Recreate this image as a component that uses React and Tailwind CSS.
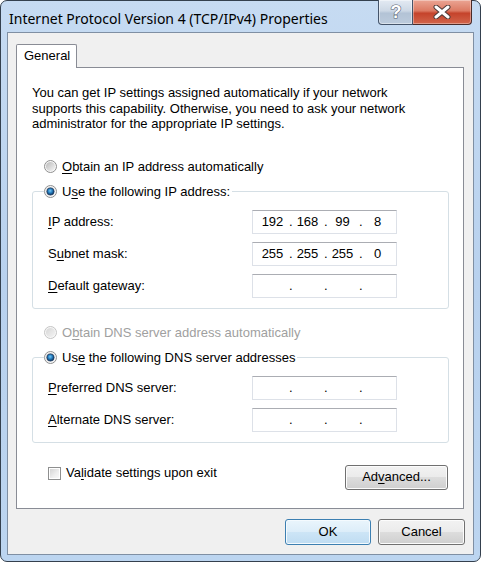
import React from "react";

const IpBox = ({ parts = ["", "", "", ""] }) => {
  return (
    <div className="h-[24px] w-[145px] border border-[#dde1e8] border-t-[#abadb3] bg-white flex items-center pl-[3px]">
      {parts.map((p, i) => (
        <React.Fragment key={i}>
          <span className="w-[33px] text-center">{p}</span>
          {i < 3 && <span className="w-[2px]">.</span>}
        </React.Fragment>
      ))}
    </div>
  );
};

const Radio = ({ checked, disabled }) => {
  const id = checked ? "on" : disabled ? "dis" : "off";
  return (
    <svg width="13" height="13" viewBox="0 0 13 13" className="shrink-0">
      <defs>
        <linearGradient id={`ring-${id}`} x1="0" y1="0" x2="1" y2="1">
          <stop offset="0" stopColor={disabled ? "#d6d6d6" : "#b9b9b9"} />
          <stop offset="1" stopColor={disabled ? "#f4f4f4" : "#f6f6f6"} />
        </linearGradient>
        <radialGradient id={`dot-${id}`} cx="0.45" cy="0.4" r="0.6">
          <stop offset="0" stopColor="#7cc8f2" />
          <stop offset="0.45" stopColor="#2a86c8" />
          <stop offset="1" stopColor="#0d2f57" />
        </radialGradient>
      </defs>
      <circle cx="6.5" cy="6.5" r="6" fill="#f7f7f7" stroke={disabled ? "#c4c4c4" : "#8f8f8f"} />
      <circle cx="6.5" cy="6.5" r="4.6" fill={`url(#ring-${id})`} />
      {checked && <circle cx="6.5" cy="6.5" r="3.6" fill={`url(#dot-${id})`} stroke="#183a63" strokeWidth="0.7" />}
    </svg>
  );
};

const Key = ({ children }) => <span className="underline underline-offset-[2px]">{children}</span>;

const App = () => {
  return (
    <div className="w-[481px] h-[562px] rounded-[7px] border border-[#34404e] bg-gradient-to-b from-[#c6dbf2] via-[#b8d1ee] to-[#bcd5f0] flex flex-col px-[6px] pb-[6px] font-['Liberation_Sans',Arial,sans-serif] text-[13px] text-black">
      {/* title bar */}
      <div className="h-[31px] flex items-start pl-[2px]">
        <span className="mt-[8px] text-[14px] leading-[20px] font-['Noto_Sans',sans-serif]">
          Internet Protocol Version 4 (TCP/IPv4) Properties
        </span>
        <div className="ml-auto -mt-px mr-[2px] flex h-[25px]">
          <div className="w-[35px] h-full rounded-bl-[4px] border border-t-0 border-[#44546a] bg-[linear-gradient(#e3eaf3_0%,#cdd8e5_45%,#b3c3d6_55%,#bccbdc_100%)] shadow-[inset_0_0_0_1px_rgba(255,255,255,0.45)] flex items-center justify-center">
            <svg width="14" height="18" viewBox="0 0 14 18">
              <text x="7" y="15" textAnchor="middle" fontSize="18" fontWeight="bold" fontFamily="Liberation Sans, Arial, sans-serif" fill="#ffffff" stroke="#5a6573" strokeWidth="1.2" paintOrder="stroke">?</text>
            </svg>
          </div>
          <div className="w-[59px] h-full rounded-br-[4px] border border-t-0 border-l-0 border-[#4a2b28] bg-[linear-gradient(#eba594_0%,#dc7a63_45%,#c5432b_55%,#d2654b_100%)] shadow-[inset_0_0_0_1px_rgba(255,255,255,0.35)] flex items-center justify-center">
            <svg width="18" height="14" viewBox="0 0 18 14">
              <path d="M3 2 L15 12 M15 2 L3 12" stroke="#4b3a38" strokeWidth="5" strokeLinecap="round" />
              <path d="M3 2 L15 12 M15 2 L3 12" stroke="#ffffff" strokeWidth="3" strokeLinecap="round" />
            </svg>
          </div>
        </div>
      </div>

      {/* client area */}
      <div className="flex-1 border border-[#7f8fa3] bg-[#f0f0f0] flex flex-col">
        <div className="mt-[11px] ml-[8px] relative z-10 -mb-px w-[61px] h-[24px] bg-white border border-b-0 border-[#898c95] rounded-t-[2px] pl-[7px] leading-[22px]">
          General
        </div>

        <div className="ml-[8px] mr-[9px] h-[442px] bg-white border border-[#898c95] pl-[15px] pr-[14px]">
          <p className="mt-[17px] leading-[15.5px]">
            You can get IP settings assigned automatically if your network
            <br />
            supports this capability. Otherwise, you need to ask your network
            <br />
            administrator for the appropriate IP settings.
          </p>

          <div className="mt-[27px] ml-[12px] h-[16px] flex items-center gap-[5px]">
            <Radio />
            <span>
              <Key>O</Key>btain an IP address automatically
            </span>
          </div>

          <fieldset className="mt-[9px] border border-[#d5dfe5] rounded-[3px] pt-[10px] pb-[10px]">
            <legend className="ml-[11px] pr-[2px] h-[16px] flex items-center gap-[5px]">
              <Radio checked />
              <span>
                U<Key>s</Key>e the following IP address:
              </span>
            </legend>
            <div className="pl-[15px] grid grid-cols-[204px_145px] gap-y-[8px] items-center">
              <span>
                <Key>I</Key>P address:
              </span>
              <IpBox parts={["192", "168", "99", "8"]} />
              <span>
                S<Key>u</Key>bnet mask:
              </span>
              <IpBox parts={["255", "255", "255", "0"]} />
              <span>
                <Key>D</Key>efault gateway:
              </span>
              <IpBox />
            </div>
          </fieldset>

          <div className="mt-[16px] ml-[12px] h-[16px] flex items-center gap-[5px] text-[#a0a0a0]">
            <Radio disabled />
            <span>
              O<Key>b</Key>tain DNS server address automatically
            </span>
          </div>

          <fieldset className="mt-[9px] border border-[#d5dfe5] rounded-[3px] pt-[10px] pb-[10px]">
            <legend className="ml-[11px] pr-[2px] h-[16px] flex items-center gap-[5px]">
              <Radio checked />
              <span>
                Us<Key>e</Key> the following DNS server addresses
              </span>
            </legend>
            <div className="pl-[15px] grid grid-cols-[204px_145px] gap-y-[8px] items-center">
              <span>
                <Key>P</Key>referred DNS server:
              </span>
              <IpBox />
              <span>
                <Key>A</Key>lternate DNS server:
              </span>
              <IpBox />
            </div>
          </fieldset>

          <div className="mt-[22px] flex items-start">
            <div className="ml-[16px] mt-[1px] h-[15px] flex items-center gap-[5px]">
              <div className="w-[13px] h-[13px] border border-[#8e8f8f] bg-white p-[1px]">
                <div className="w-full h-full bg-[linear-gradient(135deg,#d4d4d4_0%,#eeeeee_60%,#f8f8f8_100%)]" />
              </div>
              <span>
                Va<Key>l</Key>idate settings upon exit
              </span>
            </div>
            <button className="ml-auto mr-[1px] w-[103px] h-[25px] rounded-[3px] border border-[#707070] bg-[linear-gradient(#f2f2f2_0%,#ebebeb_50%,#dddddd_50%,#cfcfcf_100%)] shadow-[inset_0_0_0_1px_#fcfcfc]">
              Ad<Key>v</Key>anced...
            </button>
          </div>
        </div>

        <div className="mt-[10px] mr-[8px] flex justify-end gap-[7px]">
          <button className="w-[86px] h-[26px] rounded-[3px] border border-[#3c7fb1] bg-[linear-gradient(#eaf5fc_0%,#dcedf9_50%,#cde5f6_50%,#bfdcf2_100%)] shadow-[inset_0_0_0_1px_#f4fafe]">
            OK
          </button>
          <button className="w-[87px] h-[26px] rounded-[3px] border border-[#707070] bg-[linear-gradient(#f2f2f2_0%,#ebebeb_50%,#dddddd_50%,#cfcfcf_100%)] shadow-[inset_0_0_0_1px_#fcfcfc]">
            Cancel
          </button>
        </div>
      </div>
    </div>
  );
};

export default App;
